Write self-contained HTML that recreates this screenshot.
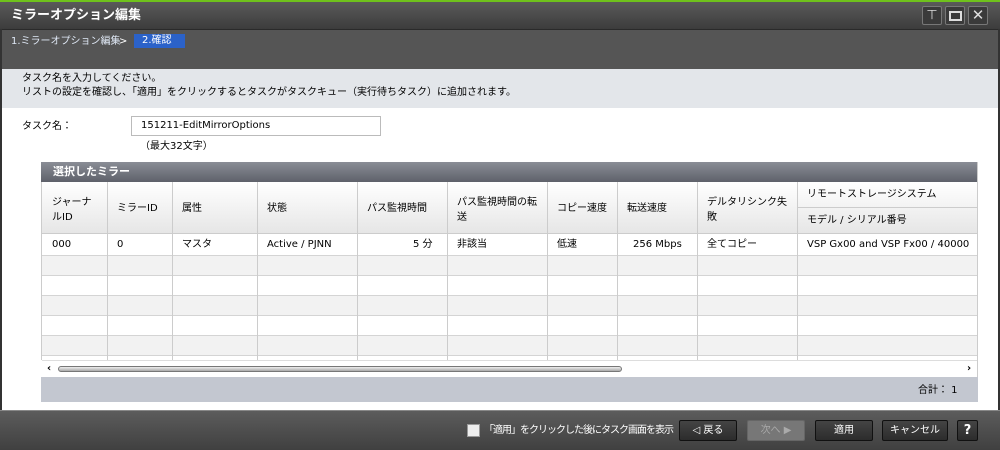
<!DOCTYPE html>
<html><head><meta charset="utf-8"><style>
*{margin:0;padding:0;box-sizing:border-box}
body{width:1000px;height:450px;overflow:hidden;background:#fff;font-family:"DejaVu Sans","Noto Sans CJK JP",sans-serif;font-size:10px;line-height:13px;color:#000;position:relative}
.a{position:absolute;white-space:nowrap}
.win{left:0;top:0;width:1000px;height:450px;border-left:2px solid #333;border-right:2px solid #333}
.title{left:0;top:0;width:1000px;height:29px;background:linear-gradient(#5a5a5a,#3c3c3c);border-top:2px solid #6fc21c}
.tbtn{top:6px;width:20px;height:19px;border:1px solid #777;border-radius:2px;background:#3a3a3a;color:#ddd;font-size:13px;text-align:center;line-height:17px}
.crumb{left:2px;top:29px;width:996px;height:40px;background:#555;border-top:1px solid #2a2a2a}
.inst{left:2px;top:69px;width:996px;height:39px;background:#e3e6ea}
.th{background:linear-gradient(#fff,#e6e6e6)}
.vl{width:1px;background:#ccc}
.hl{height:1px;background:#d4d4d4}
.foot{left:0;top:410px;width:1000px;height:40px;background:linear-gradient(#5c5c5c,#404040);border-top:1px solid #888}
.btn{top:420px;height:21px;border:1px solid #111;border-radius:2px;background:linear-gradient(#444,#2c2c2c);color:#fff;font-size:10px;text-align:center;line-height:19px}
.lat{font-family:"DejaVu Sans Mono","DejaVu Sans",monospace}
</style></head><body>
<div class="a win"></div>
<div class="a title"></div>
<div class="a" style="left:11px;top:8px;color:#fff;font-size:13px;line-height:16px;font-weight:bold">ミラーオプション編集</div>
<div class="a tbtn" style="left:922px">⊤</div>
<div class="a tbtn" style="left:945px"><div style="margin:4px auto;width:13px;height:10px;border:2px solid #ddd"></div></div>
<div class="a tbtn" style="left:968px;font-size:15px">✕</div>
<div class="a crumb"></div>
<div class="a" style="left:11px;top:35px;color:#dfe8f5">1.ミラーオプション編集</div>
<div class="a" style="left:119px;top:35px;color:#fff">&gt;</div>
<div class="a" style="left:134px;top:34px;width:51px;height:14px;background:#2b62c9;color:#fff;padding-left:8px;line-height:14px">2.確認</div>
<div class="a inst"></div>
<div class="a" style="left:22px;top:72px;line-height:14px">タスク名を入力してください。<br>リストの設定を確認し、「適用」をクリックするとタスクがタスクキュー（実行待ちタスク）に追加されます。</div>
<div class="a" style="left:22px;top:120px">タスク名：</div>
<div class="a" style="left:131px;top:116px;width:250px;height:20px;border:1px solid #bbb;padding-left:9px;line-height:18px">151211-EditMirrorOptions</div>
<div class="a" style="left:140px;top:140px">（最大32文字）</div>
<div class="a" style="left:41px;top:162px;width:937px;height:20px;background:linear-gradient(#8a8d96,#5e616a);color:#fff;font-weight:bold;font-size:11px;padding-left:12px;line-height:20px">選択したミラー</div>
<div class="a th" style="left:41px;top:182px;width:937px;height:52px;border-bottom:1px solid #ccc"></div>
<div class="a" style="left:797px;top:207px;width:180px;height:1px;background:#ccc"></div>
<div class="a" style="left:41px;top:234px;width:937px;height:126px;background:#fff"></div>
<div class="a" style="left:41px;top:255px;width:937px;height:20px;background:#f2f2f2"></div>
<div class="a" style="left:41px;top:295px;width:937px;height:20px;background:#f2f2f2"></div>
<div class="a" style="left:41px;top:335px;width:937px;height:20px;background:#f2f2f2"></div>
<div class="a hl" style="left:41px;top:255px;width:937px"></div>
<div class="a hl" style="left:41px;top:275px;width:937px"></div>
<div class="a hl" style="left:41px;top:295px;width:937px"></div>
<div class="a hl" style="left:41px;top:315px;width:937px"></div>
<div class="a hl" style="left:41px;top:335px;width:937px"></div>
<div class="a hl" style="left:41px;top:355px;width:937px"></div>
<div class="a vl" style="left:41px;top:182px;height:178px"></div>
<div class="a vl" style="left:107px;top:182px;height:178px"></div>
<div class="a vl" style="left:172px;top:182px;height:178px"></div>
<div class="a vl" style="left:257px;top:182px;height:178px"></div>
<div class="a vl" style="left:357px;top:182px;height:178px"></div>
<div class="a vl" style="left:447px;top:182px;height:178px"></div>
<div class="a vl" style="left:547px;top:182px;height:178px"></div>
<div class="a vl" style="left:617px;top:182px;height:178px"></div>
<div class="a vl" style="left:697px;top:182px;height:178px"></div>
<div class="a vl" style="left:797px;top:182px;height:178px"></div>
<div class="a vl" style="left:977px;top:162px;height:240px"></div>
<div class="a" style="left:52px;top:195px;line-height:15px">ジャーナ<br>ルID</div>
<div class="a" style="left:117px;top:202px">ミラーID</div>
<div class="a" style="left:182px;top:202px">属性</div>
<div class="a" style="left:267px;top:202px">状態</div>
<div class="a" style="left:367px;top:202px">パス監視時間</div>
<div class="a" style="left:457px;top:195px;line-height:15px">パス監視時間の転<br>送</div>
<div class="a" style="left:557px;top:202px">コピー速度</div>
<div class="a" style="left:627px;top:202px">転送速度</div>
<div class="a" style="left:707px;top:195px;line-height:15px">デルタリシンク失<br>敗</div>
<div class="a" style="left:807px;top:188px">リモートストレージシステム</div>
<div class="a" style="left:807px;top:214px">モデル / シリアル番号</div>
<div class="a" style="left:52px;top:238px">000</div>
<div class="a" style="left:117px;top:238px">0</div>
<div class="a" style="left:182px;top:238px">マスタ</div>
<div class="a" style="left:267px;top:238px">Active / PJNN</div>
<div class="a" style="left:413px;top:238px">5 分</div>
<div class="a" style="left:457px;top:238px">非該当</div>
<div class="a" style="left:557px;top:238px">低速</div>
<div class="a" style="left:633px;top:238px">256 Mbps</div>
<div class="a" style="left:707px;top:238px">全てコピー</div>
<div class="a" style="left:807px;top:238px;width:170px;overflow:hidden">VSP Gx00 and VSP Fx00 / 40000</div>
<div class="a" style="left:42px;top:360px;width:935px;height:17px;background:#fff;border-top:1px solid #ddd"></div>
<div class="a" style="left:47px;top:362px;font-weight:bold">‹</div>
<div class="a" style="left:967px;top:362px;font-weight:bold">›</div>
<div class="a" style="left:58px;top:366px;width:564px;height:6px;border:1px solid #777;border-radius:3px;background:linear-gradient(#eee,#aaa)"></div>
<div class="a" style="left:41px;top:377px;width:937px;height:25px;background:#c3c7d0"></div>
<div class="a" style="left:918px;top:384px">合計：&nbsp;1</div>
<div class="a foot"></div>
<div class="a" style="left:467px;top:424px;width:13px;height:13px;background:#eee;border:1px solid #999"></div>
<div class="a" style="left:484px;top:424px;color:#fff;letter-spacing:-1px">「適用」をクリックした後にタスク画面を表示</div>
<div class="a btn" style="left:679px;width:58px">◁ 戻る</div>
<div class="a btn" style="left:747px;width:58px;background:#777;border-color:#666;color:#aaa">次へ ▶</div>
<div class="a btn" style="left:815px;width:58px">適用</div>
<div class="a btn" style="left:882px;width:66px">キャンセル</div>
<div class="a btn" style="left:957px;width:21px;font-weight:bold;font-size:13px">?</div>
</body></html>
